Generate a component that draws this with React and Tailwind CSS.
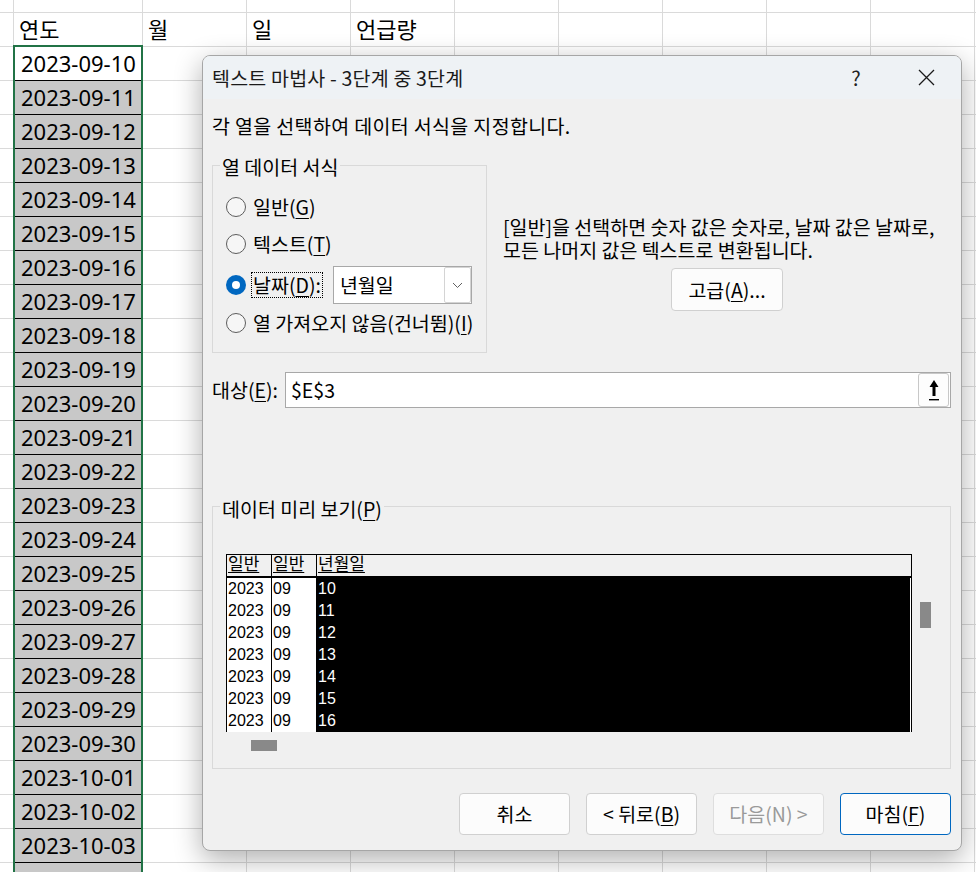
import React from "react";

const dates = [
  "2023-09-10","2023-09-11","2023-09-12","2023-09-13","2023-09-14","2023-09-15","2023-09-16",
  "2023-09-17","2023-09-18","2023-09-19","2023-09-20","2023-09-21","2023-09-22","2023-09-23",
  "2023-09-24","2023-09-25","2023-09-26","2023-09-27","2023-09-28","2023-09-29","2023-09-30",
  "2023-10-01","2023-10-02","2023-10-03","",
];
const others = [0, 1, 2, 3, 4, 5, 6, 7, 8];
const previewRows = ["10", "11", "12", "13", "14", "15", "16"];

function OtherCells({ labels = [] }) {
  return others.map((i) => (
    <div key={i} className="w-[104px] shrink-0 border-r border-b border-[#dadada] pl-[5px] flex items-center">
      {labels[i] || ""}
    </div>
  ));
}

function Radio({ checked }) {
  if (checked) {
    return (
      <div className="w-[20px] h-[20px] shrink-0 rounded-full bg-[#0067c0] flex items-center justify-center">
        <div className="w-[8px] h-[8px] rounded-full bg-white" />
      </div>
    );
  }
  return <div className="w-[20px] h-[20px] shrink-0 rounded-full border border-[#5c5c5c] bg-[#f6f6f6]" />;
}

function U({ children }) {
  return <span className="underline underline-offset-[3px] decoration-[1px]">{children}</span>;
}

function Btn({ children, variant }) {
  const cls =
    variant === "primary"
      ? "border-[#0067c0] text-black bg-[#fcfcfc]"
      : variant === "disabled"
      ? "border-[#dedede] text-[#9a9a9a] bg-[#f9f9f9]"
      : "border-[#d0d0d0] text-black bg-[#fcfcfc]";
  return (
    <div className={"w-[111px] h-[42px] rounded-[4px] border flex items-center justify-center " + cls}>
      {children}
    </div>
  );
}

export default function App() {
  return (
    <div className="relative w-[976px] h-[872px] overflow-hidden bg-white text-black font-['Noto_Sans','Noto_Sans_CJK_KR',sans-serif] text-[22px]">
      {/* spreadsheet grid */}
      <div className="flex flex-col">
        <div className="flex h-[13px]">
          <div className="w-[14px] shrink-0 border-r border-b border-[#dadada]" />
          <div className="w-[129px] shrink-0 border-r border-b border-[#dadada]" />
          <OtherCells />
        </div>
        <div className="flex h-[34px]">
          <div className="w-[14px] shrink-0 border-r border-b border-[#dadada]" />
          <div className="w-[129px] shrink-0 border-r border-b border-[#dadada] pl-[5px] flex items-center">연도</div>
          <OtherCells labels={["월", "일", "언급량"]} />
        </div>
        {dates.map((d, i) => (
          <div key={i} className="flex h-[34px]">
            <div className="w-[14px] shrink-0 border-r border-b border-[#dadada]" />
            <div
              className={
                "w-[129px] shrink-0 border-r border-r-[#dadada] border-b border-b-black pl-[7px] flex items-center " +
                (i === 0 ? "bg-white" : "bg-[#c8c8c8]")
              }
            >
              {d}
            </div>
            <OtherCells />
          </div>
        ))}
      </div>

      {/* selection outline */}
      <div className="absolute left-[13px] top-[45px] w-[130px] h-[840px] border-2 border-[#217346] pointer-events-none" />

      {/* dialog */}
      <div className="absolute left-[202px] top-[55px] w-[760px] h-[796px] rounded-[8px] border border-[#a6a6a6] bg-[#f0f0f0] shadow-[0_8px_28px_rgba(0,0,0,0.32)] overflow-hidden flex flex-col font-['Noto_Sans_CJK_KR',sans-serif] text-[19.5px] leading-[24px] text-black">
        {/* title bar */}
        <div className="h-[43px] shrink-0 bg-[#eef2f5] flex items-center pl-[9px]">
          <div className="flex-1 text-[#1a1a1a] tracking-[0.2px]">텍스트 마법사 - 3단계 중 3단계</div>
          <div className="w-[40px] mr-[27px] text-center text-[20px] text-[#222]">?</div>
          <div className="w-[46px] mr-[12px] flex items-center justify-center">
            <svg width="17" height="17" viewBox="0 0 17 17">
              <path d="M1 1 L16 16 M16 1 L1 16" stroke="#1a1a1a" strokeWidth="1.3" fill="none" />
            </svg>
          </div>
        </div>

        {/* body */}
        <div className="flex flex-col pl-[9px] pr-[10px]">
          <div className="mt-[15px] h-[24px] tracking-[0.35px]">각 열을 선택하여 데이터 서식을 지정합니다.</div>

          <div className="mt-[13px] flex items-start">
            <fieldset className="w-[275px] shrink-0 border border-[#d9d9d9] pl-[7px] pb-[11px]">
              <legend className="px-[2px] pt-[4px] leading-[24px]">열 데이터 서식</legend>
              <div className="pl-[6px] mt-[10px] flex flex-col">
                <div className="h-[36px] flex items-center gap-[7px]">
                  <Radio />
                  <span>일반(<U>G</U>)</span>
                </div>
                <div className="mt-[1px] h-[36px] flex items-center gap-[7px]">
                  <Radio />
                  <span>텍스트(<U>T</U>)</span>
                </div>
                <div className="mt-[4px] h-[38px] flex items-center">
                  <Radio checked />
                  <span className="ml-[5px] h-[26px] px-[1px] border border-dotted border-black flex items-center">
                    날짜(<U>D</U>):
                  </span>
                  <div className="ml-[10px] w-[139px] h-[38px] border border-[#a8a8a8] bg-white flex items-center">
                    <span className="flex-1 pl-[6px]">년월일</span>
                    <div className="w-[27px] h-[36px] border border-[#d4d4d4] rounded-[2px] flex items-center justify-center">
                      <svg width="11" height="7" viewBox="0 0 11 7">
                        <path d="M1 1 L5.5 5.5 L10 1" stroke="#606060" strokeWidth="1" fill="none" />
                      </svg>
                    </div>
                  </div>
                </div>
                <div className="mt-[1px] h-[36px] flex items-center gap-[7px]">
                  <Radio />
                  <span>열 가져오지 않음(건너뜀)(<U>I</U>)</span>
                </div>
              </div>
            </fieldset>

            <div className="flex-1 ml-[16px] pt-[65px] flex flex-col">
              <div className="leading-[22.5px]">
                [일반]을 선택하면 숫자 값은 숫자로, 날짜 값은 날짜로,
                <br />
                모든 나머지 값은 텍스트로 변환됩니다.
              </div>
              <div className="mt-[7px] self-center w-[112px] h-[43px] rounded-[4px] border border-[#d0d0d0] bg-[#fcfcfc] flex items-center justify-center">
                고급(<U>A</U>)...
              </div>
            </div>
          </div>

          <div className="mt-[19px] flex items-center">
            <div className="w-[73px] shrink-0">대상(<U>E</U>):</div>
            <div className="flex-1 h-[36px] border border-[#a8a8a8] bg-white flex items-center pl-[5px] pr-[1px]">
              <span className="flex-1">$E$3</span>
              <div className="w-[31px] h-[34px] border border-[#c8c8c8] rounded-[3px] bg-[#fdfdfd] flex items-center justify-center">
                <svg width="12" height="26" viewBox="0 0 12 26">
                  <path d="M6 3 L10.5 10 L7.5 10 L7.5 19 L4.5 19 L4.5 10 L1.5 10 Z" fill="#000" />
                  <rect x="1" y="22" width="10" height="1.4" fill="#000" />
                </svg>
              </div>
            </div>
          </div>

          <fieldset className="mt-[83px] border border-[#d9d9d9] pl-[7px] pb-[17px]">
            <legend className="px-[2px] pt-[6px] leading-[24px]">데이터 미리 보기(<U>P</U>)</legend>
            <div className="pl-[6px] mt-[33px]">
              <div className="flex items-start">
                <div className="w-[686px] h-[178px] shrink-0 border-l border-t border-r border-black bg-white flex flex-col overflow-hidden font-['Liberation_Sans','Noto_Sans_CJK_KR',sans-serif] text-[16px] leading-[22px]">
                  <div className="h-[23px] shrink-0 flex border-b-2 border-black bg-[#f0f0f0] text-[17px] leading-[20px]">
                    <div className="w-[45px] shrink-0 border-r border-black pl-[1px]">
                      <span className="underline underline-offset-[2px]">일반</span>
                    </div>
                    <div className="w-[45px] shrink-0 border-r border-black pl-[1px]">
                      <span className="underline underline-offset-[2px]">일반</span>
                    </div>
                    <div className="flex-1 pl-[1px]">
                      <span className="underline underline-offset-[2px]">년월일</span>
                    </div>
                  </div>
                  {previewRows.map((d) => (
                    <div key={d} className="h-[22px] shrink-0 flex">
                      <div className="w-[45px] shrink-0 border-r border-black bg-white pl-[1px]">2023</div>
                      <div className="w-[44px] shrink-0 bg-white pl-[1px]">09</div>
                      <div className="flex-1 bg-black text-white pl-[2px]">{d}</div>
                      <div className="w-[1px] shrink-0 bg-white" />
                    </div>
                  ))}
                </div>
                <div className="ml-[8px] w-[11px] pt-[48px]">
                  <div className="h-[26px] bg-[#898989]" />
                </div>
              </div>
              <div className="mt-[8px] ml-[25px] w-[26px] h-[11px] bg-[#898989]" />
            </div>
          </fieldset>

          <div className="mt-[24px] flex justify-end gap-[16px]">
            <Btn>취소</Btn>
            <Btn>&lt; 뒤로(<U>B</U>)</Btn>
            <Btn variant="disabled">다음(N) &gt;</Btn>
            <Btn variant="primary">마침(<U>F</U>)</Btn>
          </div>
        </div>
      </div>
    </div>
  );
}
